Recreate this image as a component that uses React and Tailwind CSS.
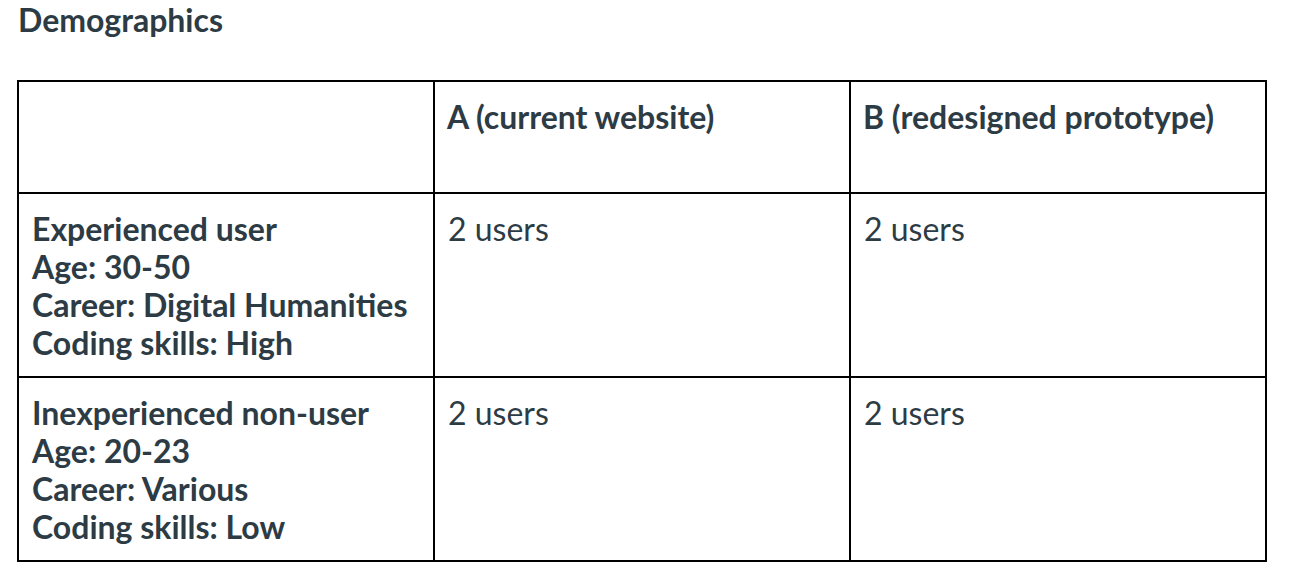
export default function App() {
  const rows = [
    {
      lines: ['Experienced user', 'Age: 30-50', 'Career: Digital Humanities', 'Coding skills: High'],
      a: '2 users',
      b: '2 users',
    },
    {
      lines: ['Inexperienced non-user', 'Age: 20-23', 'Career: Various', 'Coding skills: Low'],
      a: '2 users',
      b: '2 users',
    },
  ]

  return (
    <div className="w-[1294px] h-[584px] bg-white text-[#2d3b45] font-['Lato','Liberation_Sans',sans-serif] overflow-hidden">
      <h2 className="pl-[18px] pt-[2px] text-[32px] leading-[36px] font-bold">Demographics</h2>
      <table className="ml-[17px] mt-[42px] border-collapse table-fixed w-[1248px] text-[32px] leading-[38px]">
        <colgroup>
          <col className="w-[416px]" />
          <col className="w-[416px]" />
          <col className="w-[416px]" />
        </colgroup>
        <thead>
          <tr className="h-[112px]">
            <th className="border-2 border-black align-top" />
            <th className="border-2 border-black align-top text-left font-bold px-[12px] pt-[16px]">A (current website)</th>
            <th className="border-2 border-black align-top text-left font-bold px-[12px] pt-[16px]">B (redesigned prototype)</th>
          </tr>
        </thead>
        <tbody>
          {rows.map((r, i) => (
            <tr key={i}>
              <td className="border-2 border-black align-top font-bold px-[13px] pt-[16px] pb-[14px]">
                {r.lines.map((l) => (
                  <div key={l}>{l}</div>
                ))}
              </td>
              <td className="border-2 border-black align-top px-[13px] pt-[16px]">{r.a}</td>
              <td className="border-2 border-black align-top px-[13px] pt-[16px]">{r.b}</td>
            </tr>
          ))}
        </tbody>
      </table>
    </div>
  )
}
